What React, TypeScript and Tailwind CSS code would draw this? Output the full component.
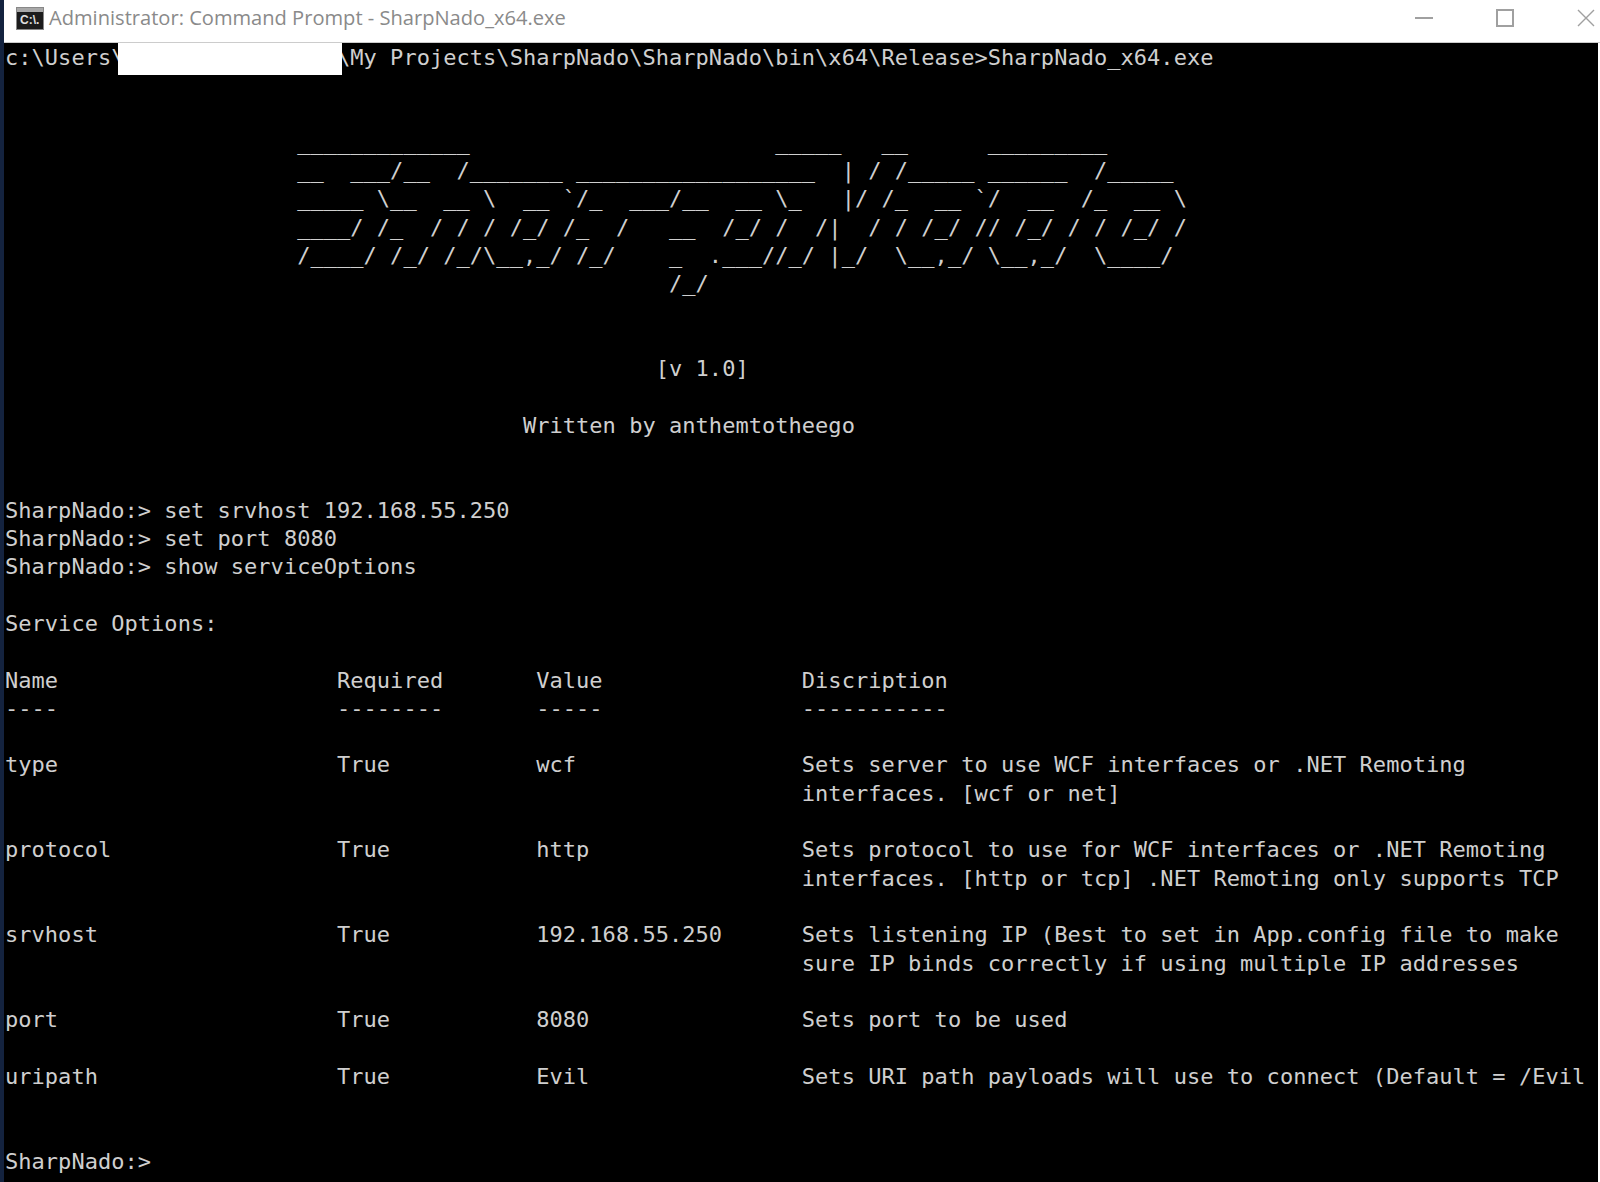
const MONO = "font-['DejaVu_Sans_Mono',monospace]";

const consoleText = String.raw`c:\Users\                \My Projects\SharpNado\SharpNado\bin\x64\Release>SharpNado_x64.exe


                      _____________                       _____   __      _________
                      __  ___/__  /_______ __________________  | / /_____ ______  /_____
                      _____ \__  __ \  __ ${"`"}/_  ___/__  __ \_   |/ /_  __ ${"`"}/  __  /_  __ \
                      ____/ /_  / / / /_/ /_  /   __  /_/ /  /|  / / /_/ // /_/ / / /_/ /
                      /____/ /_/ /_/\__,_/ /_/    _  .___//_/ |_/  \__,_/ \__,_/  \____/
                                                  /_/


                                                 [v 1.0]

                                       Written by anthemtotheego


SharpNado:> set srvhost 192.168.55.250
SharpNado:> set port 8080
SharpNado:> show serviceOptions

Service Options:

Name                     Required       Value               Discription
----                     --------       -----               -----------

type                     True           wcf                 Sets server to use WCF interfaces or .NET Remoting
                                                            interfaces. [wcf or net]

protocol                 True           http                Sets protocol to use for WCF interfaces or .NET Remoting
                                                            interfaces. [http or tcp] .NET Remoting only supports TCP

srvhost                  True           192.168.55.250      Sets listening IP (Best to set in App.config file to make
                                                            sure IP binds correctly if using multiple IP addresses

port                     True           8080                Sets port to be used

uripath                  True           Evil                Sets URI path payloads will use to connect (Default = /Evil


SharpNado:>`;

function CmdIcon() {
  return (
    <div className="flex h-[23px] w-[28px] flex-col border border-[#888] bg-[#1c1c1c]">
      <div className="h-[4px] bg-[#a8a8a8]" />
      <div className="flex-1 pl-[3px] text-[12px] leading-[16px] font-bold text-[#e0e0e0] font-['Liberation_Sans',sans-serif]">C:\.</div>
    </div>
  );
}

function WindowControls() {
  return (
    <div className="ml-auto flex items-center gap-[63px] pr-[5px]">
      <div className="h-[2px] w-[18px] bg-[#a0a0a0]" />
      <div className="h-[18px] w-[18px] border-2 border-[#a0a0a0]" />
      <svg width="18" height="18" viewBox="0 0 18 18" fill="none" stroke="#a0a0a0" strokeWidth="1.4">
        <path d="M1 1l16 16M17 1L1 17" />
      </svg>
    </div>
  );
}

export default function App() {
  return (
    <div className="flex h-[1182px] w-[1600px] overflow-hidden bg-white">
      <div className="w-[4px] bg-[#14233f]" />
      <div className="flex min-w-0 flex-1 flex-col">
        <div className="flex h-[43px] flex-none items-center border-b border-[#ccc] pb-[6px] pl-[12px] font-['Open_Sans',sans-serif] text-[20.1px] text-[#8a8a8a]">
          <CmdIcon />
          <span className="ml-[5px]">Administrator: Command Prompt - SharpNado_x64.exe</span>
          <WindowControls />
        </div>
        <div className="relative mr-[2px] flex-1 bg-black pt-[1px] pl-[1px]">
          <pre className={`${MONO} text-[22px] leading-[28.3px] tracking-[0.035px] text-[#cfcfcf]`}>{consoleText}</pre>
          <div className="absolute top-0 left-[114px] h-[32px] w-[224px] bg-white" />
        </div>
      </div>
    </div>
  );
}
